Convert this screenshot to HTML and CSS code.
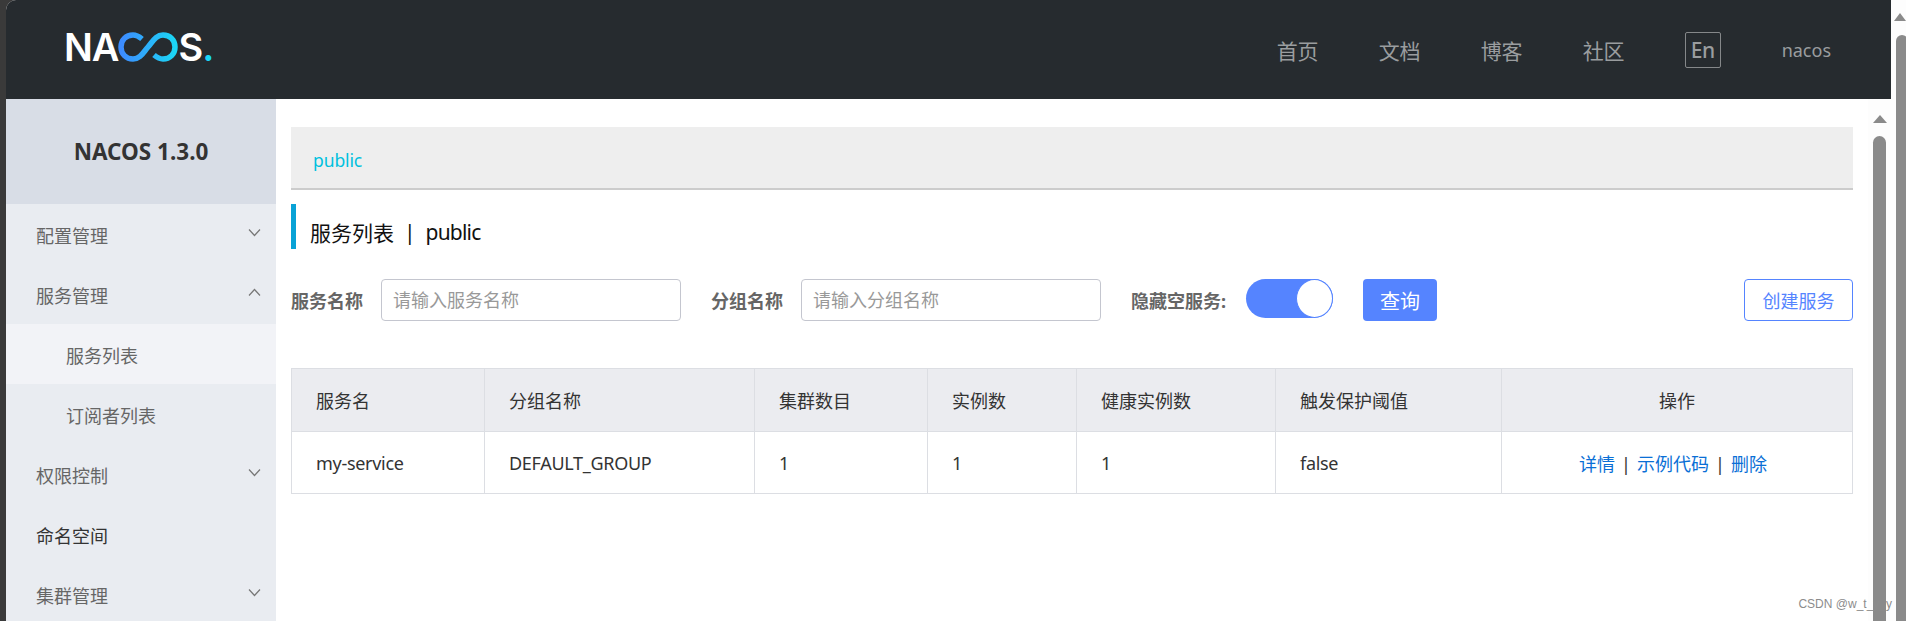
FILE: index.html
```html
<!DOCTYPE html>
<html lang="zh-CN">
<head>
  <meta charset="UTF-8" />
  <meta name="viewport" content="width=device-width, initial-scale=1.0" />
  <title>Nacos</title>
  <link rel="stylesheet" href="styles.css">
</head>
<body>
  <div class="app">
    <div class="shell">
      <header class="top">
        <div class="logo">
          <span class="logo-na">NA</span>
          <svg class="logo-mark" width="60" height="30" viewBox="0 0 60 30" fill="none" stroke-width="5.500">
            <defs>
              <linearGradient id="inf" x1="0" y1="0" x2="1" y2="0">
                <stop offset="0" stop-color="#3d8bff" />
                <stop offset="1" stop-color="#1bd6f5" />
              </linearGradient>
            </defs>
            <path stroke="url(#inf)" d="M24 7C21 4.500 18 3 15 3 8 3 3 8 3 15S8 27 15 27C22.500 27 25.500 20 30 15 34.500 10 37.500 3 45 3 52 3 57 8 57 15S52 27 45 27C42 27 39 25.500 36 23" />
          </svg>
          <span>S</span><span class="logo-dot">.</span>
        </div>
        <nav class="top-nav">
          <a>首页</a>
          <a>文档</a>
          <a>博客</a>
          <a>社区</a>
          <span class="lang">En</span>
          <span class="user">nacos</span>
        </nav>
      </header>
      <div class="body">
        <aside class="side">
          <div class="side-title">NACOS 1.3.0</div>
          <ul class="menu">
            <li>配置管理<svg class="chev" width="13" height="9" viewBox="0 0 13 9"><path d="M1 1.500l5.500 6 5.500-6" /></svg></li>
            <li>服务管理<svg class="chev" width="13" height="9" viewBox="0 0 13 9"><path d="M1 7.500l5.500-6 5.500 6" /></svg></li>
            <li class="sub active">服务列表</li>
            <li class="sub">订阅者列表</li>
            <li>权限控制<svg class="chev" width="13" height="9" viewBox="0 0 13 9"><path d="M1 1.500l5.500 6 5.500-6" /></svg></li>
            <li class="plain">命名空间</li>
            <li>集群管理<svg class="chev" width="13" height="9" viewBox="0 0 13 9"><path d="M1 1.500l5.500 6 5.500-6" /></svg></li>
          </ul>
        </aside>
        <main class="content">
          <div class="ns-bar"><a>public</a></div>
          <h2 class="page-title">服务列表<span class="sep">|</span><span class="ns">public</span></h2>
          <form class="filters">
            <label>服务名称</label>
            <input class="field" type="text" placeholder="请输入服务名称" />
            <label>分组名称</label>
            <input class="field" type="text" placeholder="请输入分组名称" />
            <label>隐藏空服务:</label>
            <span class="toggle"><i></i></span>
            <button class="btn primary" type="button">查询</button>
            <button class="btn outline" type="button">创建服务</button>
          </form>
          <table class="grid">
            <colgroup>
              <col class="c1" /><col class="c2" /><col class="c3" /><col class="c4" /><col class="c5" /><col class="c6" /><col />
            </colgroup>
            <thead>
              <tr><th>服务名</th><th>分组名称</th><th>集群数目</th><th>实例数</th><th>健康实例数</th><th>触发保护阈值</th><th class="center">操作</th></tr>
            </thead>
            <tbody>
              <tr>
                <td>my-service</td><td>DEFAULT_GROUP</td><td>1</td><td>1</td><td>1</td><td>false</td>
                <td class="center actions"><a>详情</a><span class="pipe">|</span><a>示例代码</a><span class="pipe">|</span><a>删除</a></td>
              </tr>
            </tbody>
          </table>
        </main>
        <div class="bar inner"><b></b><i></i></div>
      </div>
    </div>
    <div class="bar outer"><b></b><i></i></div>
  </div>
  <div class="mark">CSDN @w_t_y_y</div>
</body>
</html>
```

FILE: styles.css
```css
html, body { margin: 0; height: 100%; overflow: hidden; }
body { background: #3a3a3a; color: #333; font-family: "Noto Sans", "Noto Sans CJK SC", sans-serif; font-size: 18px; }
ul { list-style: none; margin: 0; padding: 0; }

.app { display: flex; height: 621px; margin-left: 6px; border-top-left-radius: 10px; overflow: hidden; background: #fff; }
.shell { flex: 1; display: flex; flex-direction: column; min-width: 0; }

.top { height: 99px; flex: none; background: #262b2f; display: flex; align-items: center; justify-content: space-between; padding-left: 58px; }
.logo { display: flex; align-items: center; color: #fff; font-family: Inter, sans-serif; font-weight: 600; font-size: 38px; line-height: 1; height: 30px; margin-top: -5px; }
.logo-na { letter-spacing: -1px; }
.logo-mark { margin: 0 1px 0 -1px; }
.logo-dot { color: #1bd6f5; margin-left: -1px; }
.top-nav { display: flex; align-items: center; color: #9a9d9f; font-size: 21px; padding-right: 60px; }
.top-nav a { width: 102px; text-align: center; }
.lang { width: 34px; height: 34px; border: 1px solid #85888a; border-radius: 2px; display: flex; align-items: center; justify-content: center; margin: 0 61px 0 30px; font-size: 21px; font-weight: 500; letter-spacing: -0.5px; }
.user { font-size: 18px; }

.body { flex: 1; display: flex; min-height: 0; }
.side { width: 270px; flex: none; background: #e9ecf1; }
.side-title { height: 105px; background: #d8dde6; display: flex; align-items: center; justify-content: center; font-size: 22.500px; font-weight: 700; color: #333; }
.menu li { height: 60px; box-sizing: border-box; padding: 2px 15px 0 30px; display: flex; align-items: center; justify-content: space-between; color: #666; }
.menu li.sub { padding-left: 60px; }
.menu li.active { background: #f2f3f7; }
.menu li.plain { color: #333; }
.chev { fill: none; stroke: #777; stroke-width: 1.200; margin-bottom: 5px; }

.content { flex: 1; min-width: 0; padding: 28px 15px 0; }
.ns-bar { height: 61px; box-sizing: content-box; background: #eee; border-bottom: 2px solid #ccc; display: flex; align-items: center; padding: 0 0 0 22px; color: #00c1de; font-size: 17.500px; }
.ns-bar a { margin-top: 4px; letter-spacing: -0.1px; }
.page-title { margin: 14px 0 30px; height: 45px; box-sizing: border-box; border-left: 5px solid #09a2d6; padding: 10px 0 0 14px; display: flex; align-items: center; font-size: 21px; font-weight: 400; color: #111; }
.sep { margin: 0 10px; }
.ns { letter-spacing: -0.8px; }

.filters { display: flex; align-items: center; height: 42px; }
.filters label { font-weight: 700; color: #666; font-size: 18px; margin-right: 18px; white-space: nowrap; }
.field { width: 300px; height: 42px; box-sizing: border-box; border: 1px solid #c4c6cf; border-radius: 4px; padding: 0 11px; font: inherit; margin-right: 30px; }
.field::placeholder { color: #999; }
.toggle { width: 87px; height: 39px; border-radius: 20px; background: #5584ff; display: flex; justify-content: flex-end; margin: 0 30px 3px 2px; }
.toggle i { width: 35px; height: 37px; border: 1px solid #5584ff; border-radius: 50%; background: #fff; }
.btn { height: 42px; box-sizing: border-box; border-radius: 4px; font: inherit; font-size: 18px; padding: 0; }
.primary { width: 74px; border: 0; background: #5584ff; color: #fff; font-size: 20px; }
.outline { width: 109px; margin-left: auto; background: #fff; border: 1px solid #5584ff; color: #5584ff; }

.grid { width: 100%; margin-top: 47px; table-layout: fixed; border-collapse: collapse; color: #333; }
.grid th, .grid td { border: 1px solid #dcdee3; padding: 0 24px; text-align: left; font-weight: 400; }
.grid th { height: 62px; background: #ebecf0; }
.grid td { height: 61px; letter-spacing: -0.3px; }
.grid .center { text-align: center; letter-spacing: 0; }
.grid .actions { padding-right: 32px; }
.grid a { color: #0a6fd6; }
.pipe { margin: 0 6px; }
.c1 { width: 193px; }
.c2 { width: 270px; }
.c3 { width: 173px; }
.c4 { width: 149px; }
.c5 { width: 199px; }
.c6 { width: 226px; }

.bar { flex: none; background: #fdfdfd; display: flex; flex-direction: column; align-items: flex-start; }
.bar b { width: 0; height: 0; border-left: 7px solid transparent; border-right: 7px solid transparent; border-bottom: 8px solid #8a8a8a; }
.bar i { flex: 1; background: #8a8a8a; border-radius: 7px 7px 0 0; }
.inner { width: 23px; padding: 16px 0 0 5px; box-sizing: border-box; }
.inner b { margin-bottom: 13px; }
.inner i { width: 13px; }
.outer { width: 15px; padding: 13px 0 0 3px; box-sizing: border-box; }
.outer b { margin-bottom: 14px; border-left-width: 6px; border-right-width: 6px; }
.outer i { width: 12px; margin-left: 2px; }

/* watermark sits over the scrollbars */
.mark { position: absolute; right: 14px; bottom: 10px; font-family: "Liberation Sans", sans-serif; font-size: 12px; color: #8c8c8c; }
```
